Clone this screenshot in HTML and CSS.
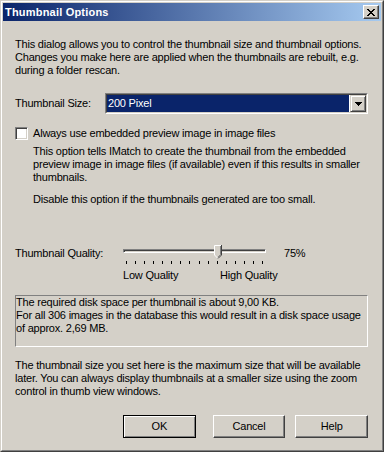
FILE: index.html
```html
<!DOCTYPE html>
<html>
<head>
<meta charset="utf-8">
<title>Thumbnail Options</title>
<link rel="stylesheet" href="styles.css">
</head>
<body>
<div class="window">
  <div class="frame">
    <div class="titlebar">
      <span class="title">Thumbnail Options</span>
      <button class="close" type="button" aria-label="Close">
        <svg width="8" height="7" viewBox="0 0 8 7" shape-rendering="crispEdges"><path fill="#000" d="M0 0h2v1h-2z M6 0h2v1h-2z M1 1h2v1h-2z M5 1h2v1h-2z M2 2h4v1h-4z M3 3h2v1h-2z M2 4h4v1h-4z M1 5h2v1h-2z M5 5h2v1h-2z M0 6h2v1h-2z M6 6h2v1h-2z"/></svg>
      </button>
    </div>
    <div class="content">
      <p class="intro">This dialog allows you to control the thumbnail size and thumbnail options.<br>Changes you make here are applied when the thumbnails are rebuilt, e.g.<br>during a folder rescan.</p>

      <div class="size-row">
        <span class="size-label">Thumbnail Size:</span>
        <div class="combo">
          <div class="combo-inner">
            <div class="combo-value">200 Pixel</div>
            <div class="combo-btn">
              <svg width="7" height="4" viewBox="0 0 7 4" shape-rendering="crispEdges"><path fill="#000" d="M0 0h7v1h-7z M1 1h5v1h-5z M2 2h3v1h-3z M3 3h1v1h-1z"/></svg>
            </div>
          </div>
        </div>
      </div>

      <div class="check-row">
        <span class="checkbox"></span>
        <span>Always use embedded preview image in image files</span>
      </div>
      <div class="check-desc">
        <p>This option tells IMatch to create the thumbnail from the embedded<br>preview image in image files (if available) even if this results in smaller<br>thumbnails.</p>
        <p class="desc2">Disable this option if the thumbnails generated are too small.</p>
      </div>

      <div class="quality-row">
        <span class="quality-label">Thumbnail Quality:</span>
        <div class="slider">
          <div class="groove"></div>
          <div class="ticks">
            <i class="tick"></i><i class="tick"></i><i class="tick"></i><i class="tick"></i>
            <i class="tick"></i><i class="tick"></i><i class="tick"></i><i class="tick"></i>
            <i class="tick"></i><i class="tick"></i><i class="tick"></i><i class="tick"></i>
            <i class="tick"></i><i class="tick"></i><i class="tick"></i><i class="tick"></i>
          </div>
          <svg class="thumb" style="left: 91px" width="8" height="14" viewBox="0 0 8 14">
            <polygon points="0,0 8,0 8,10 4,14 0,10" fill="#d4d0c8"/>
            <path d="M0.5 10V0.5H7" stroke="#fff" fill="none"/>
            <path d="M0.5 10L4 13.5" stroke="#fff" fill="none"/>
            <path d="M7.5 0V10L4 13.5" stroke="#404040" fill="none"/>
            <path d="M6.5 1V9.6L4 12.2" stroke="#808080" fill="none"/>
          </svg>
        </div>
        <span class="pct">75%</span>
      </div>
      <div class="quality-scale">
        <span class="low">Low Quality</span>
        <span>High Quality</span>
      </div>

      <div class="info">The required disk space per thumbnail is about 9,00 KB.<br>For all 306 images in the database this would result in a disk space usage<br>of approx. 2,69 MB.</div>

      <p class="note">The thumbnail size you set here is the maximum size that will be available<br>later. You can always display thumbnails at a smaller size using the zoom<br>control in thumb view windows.</p>

      <div class="buttons">
        <button class="btn btn-default" type="button">OK</button>
        <button class="btn btn-cancel" type="button">Cancel</button>
        <button class="btn btn-help" type="button">Help</button>
      </div>
    </div>
  </div>
</div>
</body>
</html>
```
FILE: styles.css
```css
html, body {
  margin: 0;
  padding: 0;
  background: #d4d0c8;
}

body {
  font-family: "Liberation Sans", Arial, sans-serif;
  font-size: 11px;
  letter-spacing: -0.2px;
  line-height: 13px;
  color: #000;
}

.window {
  width: 384px;
  height: 452px;
  box-sizing: border-box;
  border: 1px solid;
  border-color: #d4d0c8 #404040 #404040 #d4d0c8;
  background: #d4d0c8;
  overflow: hidden;
}

.frame {
  height: 100%;
  box-sizing: border-box;
  border: 1px solid;
  border-color: #fff #808080 #808080 #fff;
  padding: 1px;
}

.titlebar {
  height: 18px;
  display: flex;
  align-items: center;
  padding: 0 2px;
  background: linear-gradient(to right, #0a246a, #a6caf0);
}

.title {
  flex: 1;
  color: #fff;
  font-weight: bold;
  letter-spacing: 0.2px;
  white-space: nowrap;
}

.close {
  width: 16px;
  height: 14px;
  box-sizing: border-box;
  padding: 0 1px 0 0;
  border: 1px solid;
  border-color: #fff #404040 #404040 #fff;
  box-shadow: inset -1px -1px #808080;
  background: #d4d0c8;
  display: flex;
  align-items: center;
  justify-content: center;
}

.close svg {
  display: block;
}

.content {
  padding: 17px 13px 0 12px;
}

p {
  margin: 0;
  white-space: nowrap;
}

.size-row {
  display: flex;
  align-items: center;
  height: 21px;
  margin-top: 16px;
}

.size-label {
  width: 90px;
}

.combo {
  width: 263px;
  height: 21px;
  box-sizing: border-box;
  border: 1px solid;
  border-color: #808080 #fff #fff #808080;
}

.combo-inner {
  height: 100%;
  box-sizing: border-box;
  border: 1px solid;
  border-color: #404040 #d4d0c8 #d4d0c8 #404040;
  background: #fff;
  display: flex;
}

.combo-value {
  flex: 1;
  background: #0a246a;
  color: #fff;
  padding-left: 1px;
  line-height: 17px;
  margin-right: 1px;
}

.combo-btn {
  width: 16px;
  box-sizing: border-box;
  border: 1px solid;
  border-color: #d4d0c8 #404040 #404040 #d4d0c8;
  box-shadow: inset 1px 1px #fff, inset -1px -1px #808080;
  background: #d4d0c8;
  display: flex;
  align-items: center;
  justify-content: center;
}

.combo-btn svg {
  display: block;
}

.check-row {
  display: flex;
  align-items: center;
  height: 13px;
  margin-top: 13px;
  white-space: nowrap;
}

.checkbox {
  width: 13px;
  height: 13px;
  box-sizing: border-box;
  border: 1px solid;
  border-color: #808080 #fff #fff #808080;
  box-shadow: inset 1px 1px #404040, inset -1px -1px #d4d0c8;
  background: #fff;
  margin-right: 5px;
  flex: none;
}

.check-desc {
  margin: 5px 0 0 18px;
}

.desc2 {
  margin-top: 9px;
}

.quality-row {
  display: flex;
  align-items: flex-start;
  margin-top: 39px;
  white-space: nowrap;
}

.quality-label {
  width: 108px;
  margin-top: 2px;
}

.slider {
  position: relative;
  width: 143px;
  height: 21px;
}

.groove {
  margin-top: 4px;
  height: 4px;
  box-sizing: border-box;
  border: 1px solid;
  border-color: #808080 #fff #fff #808080;
  box-shadow: inset 1px 1px #404040;
  background: #d4d0c8;
}

.ticks {
  display: flex;
  justify-content: space-between;
  margin: 8px 3px 0;
}

.tick {
  display: block;
  width: 1px;
  height: 3px;
  background: #000;
}

.thumb {
  position: absolute;
  top: 0;
  display: block;
}

.pct {
  margin-left: 18px;
  margin-top: 2px;
}

.quality-scale {
  display: flex;
  margin-top: 3px;
  padding-left: 108px;
  white-space: nowrap;
}

.low {
  width: 97px;
}

.info {
  margin-top: 13px;
  height: 52px;
  box-sizing: border-box;
  border: 1px solid;
  border-color: #808080 #fff #fff #808080;
  white-space: nowrap;
}

.note {
  margin-top: 12px;
}

.buttons {
  display: flex;
  margin-top: 17px;
  padding-left: 108px;
}

.btn {
  width: 73px;
  height: 23px;
  box-sizing: border-box;
  padding: 0;
  font: inherit;
  letter-spacing: inherit;
  color: #000;
  background: #d4d0c8;
  border: 1px solid;
  border-color: #fff #404040 #404040 #fff;
  box-shadow: inset -1px -1px #808080;
}

.btn-default {
  border-color: #000;
  box-shadow: inset 1px 1px #fff, inset -1px -1px #808080;
}

.btn-cancel {
  margin-left: 17px;
}

.btn-help {
  margin-left: 10px;
}
```
